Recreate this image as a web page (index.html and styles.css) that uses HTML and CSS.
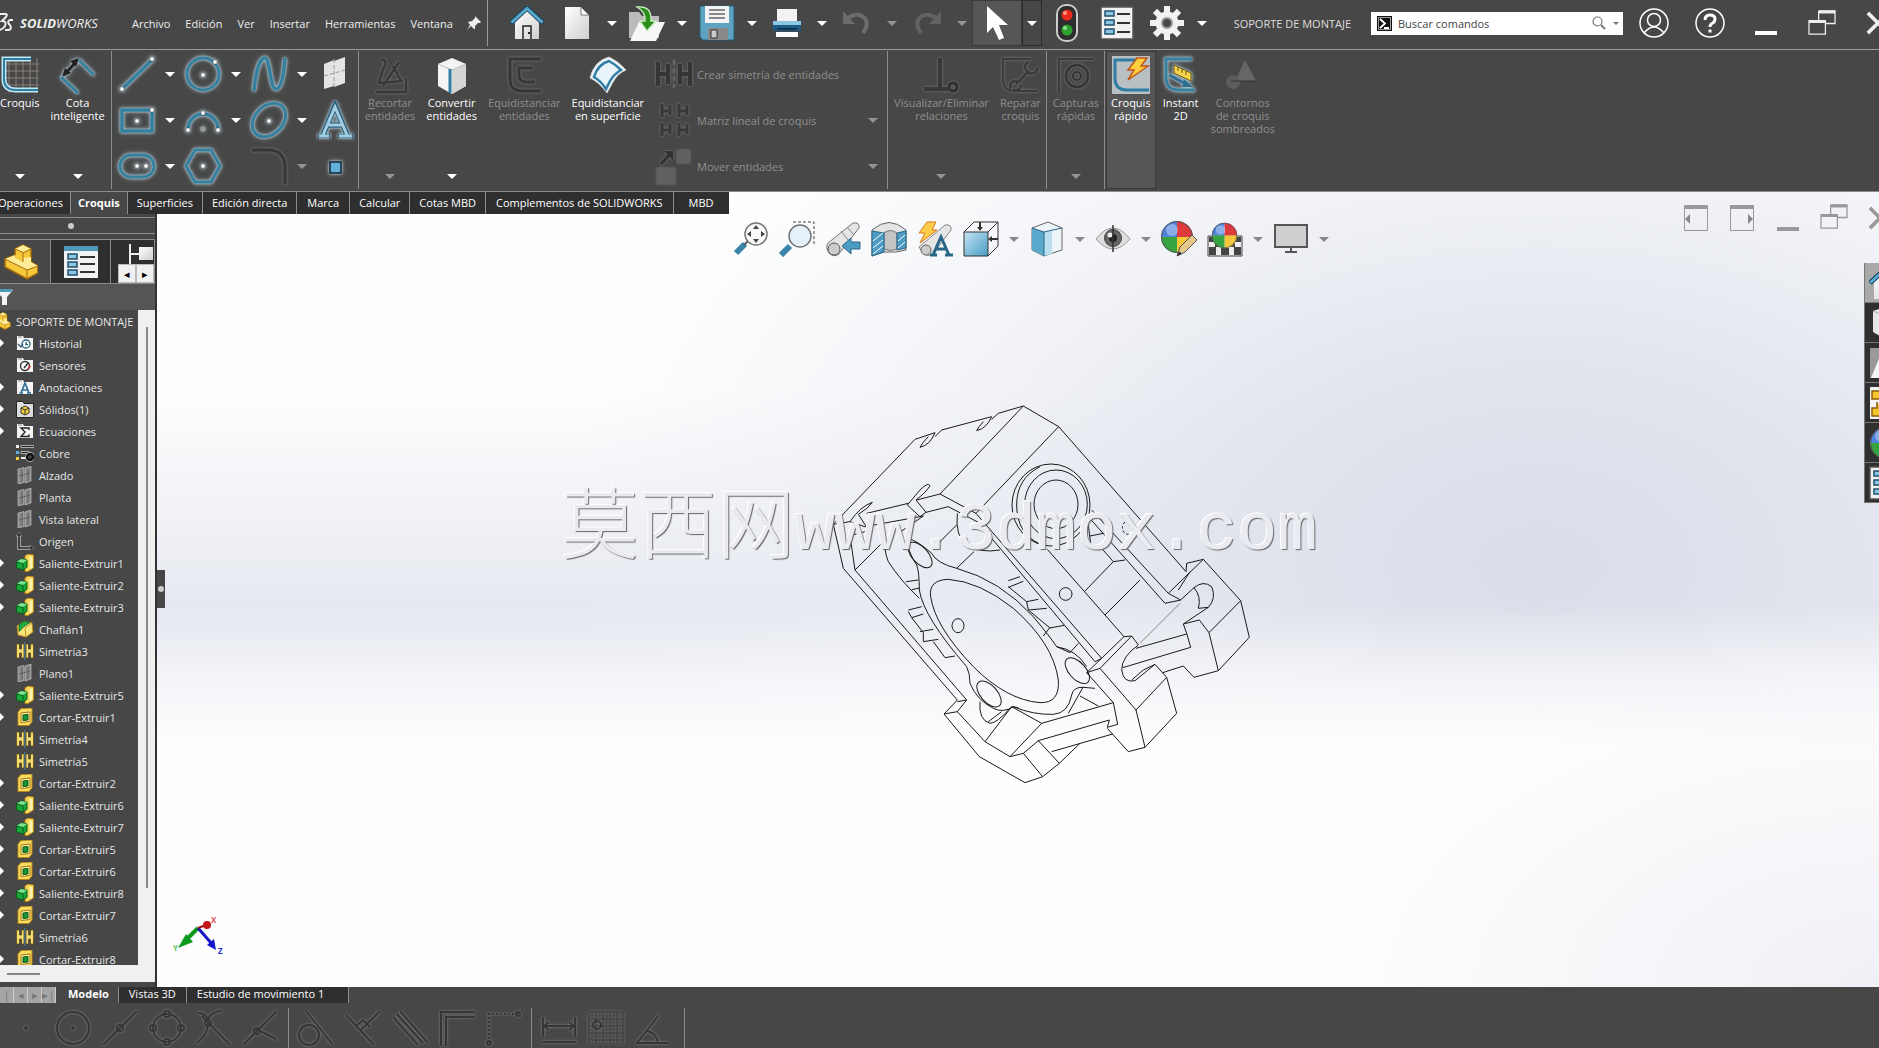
FILE: index.html
```html
<!DOCTYPE html>
<html lang="es">
<head>
    <meta charset="UTF-8">
    <meta name="viewport" content="width=device-width, initial-scale=1.0">
    <title>SOLIDWORKS - SOPORTE DE MONTAJE</title>
    <link rel="stylesheet" href="styles.css">
</head>
<body>
    <!-- shared icons -->
    <svg class="defs" width="0" height="0">
        <defs>
            <linearGradient id="g-white" x1="0" y1="0" x2="1" y2="1"><stop offset="0" stop-color="#fff"/><stop offset="1" stop-color="#cfcfcf"/></linearGradient>
            <linearGradient id="g-blue" x1="0" y1="0" x2="1" y2="1"><stop offset="0" stop-color="#c5e4f3"/><stop offset="1" stop-color="#4a9cc4"/></linearGradient>
        </defs>
        <symbol id="i-folder" viewBox="0 0 18 18"><path d="M1 2h6l1 2h9v12H1z" fill="#f4f4f4"/><path d="M2 3h4" stroke="#888"/></symbol>
        <symbol id="i-history" viewBox="0 0 18 18"><use href="#i-folder"/><circle cx="10" cy="10" r="4" fill="#fff" stroke="#2c5f7a" stroke-width="1.3"/><path d="M10 8v2.500h2M2 10l3 3 2-3" fill="none" stroke="#2c5f7a" stroke-width="1.300"/></symbol>
        <symbol id="i-sensor" viewBox="0 0 18 18"><use href="#i-folder"/><circle cx="9" cy="10" r="4.500" fill="#fff" stroke="#333" stroke-width="1.400"/><path d="M8 12l4-5" stroke="#333" stroke-width="1.500"/><path d="M12 13l2-3" stroke="#c33" stroke-width="2"/></symbol>
        <symbol id="i-note" viewBox="0 0 18 18"><use href="#i-folder"/><path d="M5 15L9 5l4 10M6.500 12h5M3.500 15h3.500M11 15h4" fill="none" stroke="#2f6f98" stroke-width="1.700"/></symbol>
        <symbol id="i-solid" viewBox="0 0 18 18"><path d="M.5 1.500h6.500l1 2h9.500v14H.5z" fill="#ddd" stroke="#222"/><path d="M5 8l4-2 4 2v5l-4 2-4-2z" fill="#f2cf3a" stroke="#333"/><path d="M5 8l4 2 4-2M9 10v5" fill="none" stroke="#333"/></symbol>
        <symbol id="i-sigma" viewBox="0 0 18 18"><use href="#i-folder"/><path d="M13 8V6H5l4 4-4 4.500h8v-2" fill="none" stroke="#222" stroke-width="1.400"/></symbol>
        <symbol id="i-material" viewBox="0 0 18 18"><path d="M0 1h3v3H0z" fill="#eee"/><path d="M0 7h3v3H0z" fill="#62a9dd"/><path d="M0 13h3v3H0z" fill="#f2cf3a"/><path d="M5 1.500h13v2H5zM5 7.500h8v2H5z" fill="#222" stroke="#bbb" stroke-width=".9"/><path d="M5 14h5" stroke="#eee" stroke-width="2"/><circle cx="14" cy="13" r="3" fill="none" stroke="#111" stroke-width="2.500"/><circle cx="14" cy="13" r="4.600" fill="none" stroke="#bbb" stroke-width=".8"/></symbol>
        <symbol id="i-plane" viewBox="0 0 18 18"><path d="M2 3l6-1.500v15L2 18zM9 2l6-2v15l-6 2z" fill="#8a8a8a" stroke="#bbb" stroke-width=".7"/><path d="M6 3v13M12 3v12M3 10l11-3" stroke="#555" stroke-width=".8"/></symbol>
        <symbol id="i-origin" viewBox="0 0 18 18"><path d="M3 2v14h13" fill="none" stroke="#bbb" stroke-width="3.500"/><path d="M3 1v15h14" fill="none" stroke="#222" stroke-width="1.600"/><path d="M0 4l3-4 3 4zM14 13l4 3-4 3z" fill="#222" stroke="#aaa" stroke-width=".6"/></symbol>
        <symbol id="i-boss" viewBox="0 0 18 18"><path d="M9 2l3-2 5.500 1v13L12 17.500H9z" fill="#f4d95c" stroke="#b98314"/><path d="M13.500 3.500v12l3-2V2z" fill="#fff3b0"/><path d="M.5 8L5 5l6 1v7l-4 3-6.500-2z" fill="#19a73a" stroke="#0b5a1c"/><path d="M1 8l6 1.500V15" fill="none" stroke="#0b5a1c"/><path d="M7 9l4-3-6-1-4 2.500z" fill="#7be48c"/></symbol>
        <symbol id="i-cut" viewBox="0 0 18 18"><path d="M2 4l3-3.500L16 0v14l-3 3.500H2z" fill="#f7dc62" stroke="#b98314"/><path d="M5 5l9-1v9.500l-9 1z" fill="#fff0a0" stroke="#a87412"/><path d="M7 7l5-.6v5.600l-5 .6z" fill="#17953a" stroke="#0b5a1c"/></symbol>
        <symbol id="i-mirror" viewBox="0 0 18 18"><path d="M.5 2h3v5h2V2H8v14H5.500v-5h-2v5h-3zM17.500 2h-3v5h-2V2H10v14h2.500v-5h2v5h3z" fill="#f5dc70" stroke="#5d4a1a" stroke-width=".8"/><path d="M9 0v18" stroke="#4a86ab"/></symbol>
        <symbol id="i-chamfer" viewBox="0 0 18 18"><path d="M1 6l7-5 8 2 1 9-7 5-8-2z" fill="#f8e27a" stroke="#b98314"/><path d="M3 5l5-4 6 1.500-6 4-5 5z" fill="#20ad42" stroke="#0b5a1c" stroke-width=".8"/><path d="M9 8l1 9M9 8l7-5" stroke="#c99a2b"/></symbol>
        <symbol id="i-part" viewBox="0 0 34 36"><path d="M1 15l10-4V5l8-4 8 4v13l7 4v7l-11 6-22-12z" fill="#f6c93c" stroke="#a06a0a" stroke-width="1.500"/><path d="M11 5l8 3 8-3-8-4zM1 15l10-4v3l8 4v-4l8-1v5l7 4-11 4z" fill="#ffec96"/><path d="M11 5l8 3.500V18M1 15l22 11v9M23 26l11-4M19 9l8-4" fill="none" stroke="#a06a0a"/></symbol>
        <symbol id="i-props" viewBox="0 0 34 34"><path d="M1 1h32v32H1z" fill="#f2f2f2" stroke="#555" stroke-width="1.500"/><path d="M5 5h9v5H5zM5 14h9v5H5zM5 23h9v5H5z" fill="#8cc7e6" stroke="#1f4f6b" stroke-width="1.500"/><path d="M17 8h13M17 17h13M17 26h13" stroke="#333" stroke-width="2"/></symbol>
        <symbol id="i-home" viewBox="0 0 34 34"><path d="M5 16L17 5l12 11v17H5z" fill="url(#g-white)"/><path d="M1 17L17 2l16 15" fill="none" stroke="#17465f" stroke-width="5"/><path d="M1.500 16.500L17 2.500l15.500 14" fill="none" stroke="#5aa9ce" stroke-width="3"/><path d="M13 33V20h8v13" fill="none" stroke="#222" stroke-width="1.500"/><path d="M18 27h2" stroke="#222" stroke-width="2"/></symbol>
        <symbol id="i-restore" viewBox="0 0 30 28"><path d="M11 1h17v13H18M11 11V1M1 11h17v14H1z" fill="none" stroke="currentColor" stroke-width="1.300"/><path d="M11 2h17M1 12h17" stroke="currentColor" stroke-width="3"/></symbol>
        <symbol id="i-cross" viewBox="0 0 26 26"><path d="M2 2l22 22M24 2L2 24" stroke="currentColor" stroke-width="4"/></symbol>
        <symbol id="i-ball" viewBox="0 0 34 34"><path d="M17 17V1A16 16 0 0 0 1 17z" fill="#4f83dc"/><path d="M17 17h16A16 16 0 0 0 17 1z" fill="#dd3a3e"/><path d="M17 17v16a16 16 0 0 0 16-16z" fill="#f5c73a"/><path d="M17 17H1a16 16 0 0 0 16 16z" fill="#36a53f"/><circle cx="12" cy="10" r="6" fill="#fff" opacity=".35"/><circle cx="17" cy="17" r="15.500" fill="none" stroke="#555"/></symbol>
    </svg>

    <header class="titlebar">
        <div class="brand">
            <svg class="brand-mark" viewBox="0 0 18 22"><path d="M2 2h8q2 1-1 4L6 9q5 0 3 5-3 5-9 4M17 8h-3q-3 1-1 4 4 4 0 6h-4" fill="none" stroke="#eee" stroke-width="2"/></svg>
            <span><b>SOLID</b>WORKS</span>
        </div>
        <nav class="menu">
            <a href="#">Archivo</a>
            <a href="#">Edición</a>
            <a href="#">Ver</a>
            <a href="#">Insertar</a>
            <a href="#">Herramientas</a>
            <a href="#">Ventana</a>
            <button class="pin" aria-label="Anclar"><svg width="14" height="14" viewBox="0 0 14 14"><path d="M8 0l6 6-1 1-2 0-3 3 0 3-1 0-3-3-4 4 3-5-2-3 4-1 3-3z" fill="#eee"/></svg></button>
        </nav>
        <div class="quick">
            <button aria-label="Inicio"><svg width="34" height="34"><use href="#i-home"/></svg></button>
            <button aria-label="Nuevo"><svg width="26" height="34" viewBox="0 0 26 34"><path d="M1 1h16l8 8v24H1z" fill="url(#g-white)"/><path d="M17 1v8h8z" fill="#fff" stroke="#777"/></svg></button>
            <button class="drop" aria-label="Más"><i class="caret"></i></button>
            <button aria-label="Abrir"><svg width="38" height="38" viewBox="0 0 38 38"><path d="M1 8h10l3 4h17v22H1z" fill="#bbb"/><path d="M11 18h26l-9 19H2z" fill="#f7f7f7"/><path d="M9 3q15-2 14 14h5l-9 10-7-10h5Q18 8 9 3z" fill="#2d8f1b" stroke="#cdeec4" stroke-width="1.300"/></svg></button>
            <button class="drop" aria-label="Más"><i class="caret"></i></button>
            <button aria-label="Guardar"><svg width="36" height="36" viewBox="0 0 36 36"><path d="M1 1h34v34H4l-3-3z" fill="#5ea2c2" stroke="#2a5d77"/><path d="M6 1h24v17H6z" fill="#f4f4f4"/><path d="M10 5h16M10 9h16M10 13h16" stroke="#666" stroke-width="1.500"/><path d="M9 23h20v12H9z" fill="#888"/><path d="M12 25h6v8h-6z" fill="#ccc" stroke="#333"/></svg></button>
            <button class="drop" aria-label="Más"><i class="caret"></i></button>
            <button aria-label="Imprimir"><svg width="30" height="30" viewBox="0 0 30 30"><path d="M5 1h20v14H5z" fill="#f2f2f2"/><path d="M1 13h28v10H1z" fill="#8cc7e6"/><path d="M1 17h28v6H1z" fill="#1d5b82"/><path d="M5 20h20v2H5z" fill="#0d3854"/><path d="M4 24h22v5H4z" fill="#fff"/></svg></button>
            <button class="drop" aria-label="Más"><i class="caret"></i></button>
            <button aria-label="Deshacer" disabled><svg width="30" height="28" viewBox="0 0 30 28"><path d="M3 12q8-9 17-5 9 6 1 17" fill="none" stroke="#6c6c6c" stroke-width="4"/><path d="M1 2v13h12z" fill="#6c6c6c"/></svg></button>
            <button class="drop" aria-label="Más" disabled><i class="caret"></i></button>
            <button aria-label="Rehacer" disabled><svg width="30" height="28" viewBox="0 0 30 28"><path d="M27 12q-8-9-17-5-9 6-1 17" fill="none" stroke="#626262" stroke-width="4"/><path d="M29 2v13H17z" fill="#626262"/></svg></button>
            <button class="drop" aria-label="Más" disabled><i class="caret"></i></button>
            <button class="picked" aria-label="Seleccionar"><svg width="24" height="36" viewBox="0 0 24 36"><path d="M2 1v27l6-6 6 13 5-2-5-13h9z" fill="#fff"/></svg></button>
            <button class="drop picked-drop" aria-label="Más"><i class="caret"></i></button>
            <button aria-label="Reconstruir"><svg width="22" height="38" viewBox="0 0 22 38"><rect x="1" y="1" width="20" height="36" rx="9" fill="#2d2d2d" stroke="#ccc" stroke-width="2"/><circle cx="11" cy="11" r="5.500" fill="#e8291b"/><circle cx="11" cy="26" r="5.500" fill="#2fa032"/><circle cx="9" cy="9" r="2" fill="#ff9a80"/><circle cx="9" cy="24" r="2" fill="#8ddc8a"/></svg></button>
            <button aria-label="Propiedades"><svg width="34" height="34"><use href="#i-props"/></svg></button>
            <button aria-label="Opciones"><svg width="34" height="34" viewBox="0 0 34 34"><g fill="#f2f2f2"><path d="M14 0h6v34h-6z"/><path d="M14 0h6v34h-6z" transform="rotate(45 17 17)"/><path d="M14 0h6v34h-6z" transform="rotate(90 17 17)"/><path d="M14 0h6v34h-6z" transform="rotate(135 17 17)"/><circle cx="17" cy="17" r="11.500"/></g><circle cx="17" cy="17" r="5" fill="#474747" stroke="#999" stroke-width="2"/></svg></button>
            <button class="drop" aria-label="Más"><i class="caret"></i></button>
        </div>
        <div class="doc-title">SOPORTE DE MONTAJE</div>
        <div class="search">
            <svg width="15" height="15" viewBox="0 0 15 15"><path d="M0 0h15v15H0z" fill="#111"/><path d="M1.500 1.500h12v12h-12z" fill="none" stroke="#fff" stroke-width=".6"/><path d="M3 3l5 4.500L3 12M7 12h5" fill="none" stroke="#fff" stroke-width="1.800"/></svg>
            <input type="text" aria-label="Buscar comandos" placeholder="Buscar comandos">
            <button aria-label="Buscar"><svg width="14" height="14" viewBox="0 0 14 14"><circle cx="5.500" cy="5.500" r="4.500" fill="none" stroke="#777" stroke-width="1.200"/><path d="M9 9l4 4" stroke="#777" stroke-width="2"/></svg></button>
            <button aria-label="Más"><i class="caret small"></i></button>
        </div>
        <div class="window-controls">
            <button aria-label="Usuario"><svg width="30" height="30" viewBox="0 0 30 30" fill="none" stroke="#fff" stroke-width="1.500"><circle cx="15" cy="15" r="14"/><circle cx="15" cy="12" r="6.500"/><path d="M5 25q10-12 20 0"/></svg></button>
            <button aria-label="Ayuda"><svg width="30" height="30" viewBox="0 0 30 30" fill="none" stroke="#fff"><circle cx="15" cy="15" r="14" stroke-width="1.500"/><path d="M10 12q0-5 5-5t5 4q0 3-3 4.500-2 1-2 3.500" stroke-width="3"/><path d="M15 21.500v3" stroke-width="3"/></svg></button>
            <button aria-label="Minimizar"><svg width="22" height="26" viewBox="0 0 22 26"><path d="M0 21h22v4H0z" fill="#fff"/></svg></button>
            <button aria-label="Restaurar"><svg width="29" height="27"><use href="#i-restore"/></svg></button>
            <button aria-label="Cerrar"><svg width="24" height="24"><use href="#i-cross"/></svg></button>
        </div>
    </header>

    <section class="ribbon">
        <div class="group first">
            <button class="tool"><svg width="38" height="38" viewBox="0 0 38 38"><path d="M8 2v35M15 2v35M22 2v35M29 2v35M36 2v35M4 8h34M4 15h34M4 22h34M4 29h34" stroke="#8a8178"/><path d="M30 3H3v20q0 11 12 11h22" fill="none" stroke="#bfe6f5" stroke-width="5"/><path d="M30 3H3v20q0 11 12 11h22" fill="none" stroke="#2f7d9f" stroke-width="2"/></svg><span>Croquis</span><i class="caret"></i></button>
            <button class="tool"><svg class="glow" width="38" height="38" viewBox="0 0 38 38"><path d="M20 4l15 15M2 21l17 16" stroke="#36809f" stroke-width="3"/><path d="M2 21L20 3" stroke="#bfe6f5"/><path d="M7 17L17 6" stroke="#222" stroke-width="3"/><path d="M3 21l3-9 6 5zM20 2l-9 3 6 6z" fill="#222"/></svg><span>Cota<br>inteligente</span><i class="caret"></i></button>
        </div>

        <div class="group sketch-grid">
            <div class="cell"><button aria-label="Línea"><svg class="glow" viewBox="0 0 38 38"><path d="M4 34L34 5" stroke="#36809f" stroke-width="3.500"/><path d="M2 32h4v4H2zM32 2h4v4h-4z" class="pt"/></svg></button><i class="caret"></i></div>
            <div class="cell"><button aria-label="Círculo"><svg class="glow" viewBox="0 0 38 38"><circle cx="19" cy="19" r="16" fill="none" stroke="#36809f" stroke-width="3"/><path d="M17 18h4v4h-4zM29 5h4v4h-4z" class="pt"/></svg></button><i class="caret"></i></div>
            <div class="cell"><button aria-label="Spline"><svg class="glow" viewBox="0 0 38 38"><path d="M4 36C6 14 10 3 15 3s5 31 11 31S34 16 35 3" fill="none" stroke="#36809f" stroke-width="3.500"/></svg></button><i class="caret"></i></div>
            <div class="cell"><button aria-label="Plano"><svg viewBox="0 0 38 38"><path d="M8 9l10-4v26L8 34zM18 6l11-4v26l-11 4z" fill="#e4e4e4"/><path d="M18 4v28M8 21l21-6" stroke="#999" stroke-dasharray="4 2"/></svg></button></div>
            <div class="cell"><button aria-label="Rectángulo"><svg class="glow" viewBox="0 0 38 38"><path d="M4 9h30v21H4z" fill="none" stroke="#36809f" stroke-width="3.500"/><path d="M17 18h4v4h-4zM32 7h4v4h-4z" class="pt"/></svg></button><i class="caret"></i></div>
            <div class="cell"><button aria-label="Arco"><svg class="glow" viewBox="0 0 38 38"><path d="M4 28a15 15 0 0 1 30 0" fill="none" stroke="#36809f" stroke-width="3.500"/><path d="M2 27h4v4H2zM32 27h4v4h-4zM17 10h4v4h-4z" class="pt"/><path d="M17 26h4v4h-4z" fill="#999"/></svg></button><i class="caret"></i></div>
            <div class="cell"><button aria-label="Elipse"><svg class="glow" viewBox="0 0 38 38"><ellipse cx="19" cy="19" rx="19" ry="14" transform="rotate(-45 19 19)" fill="none" stroke="#36809f" stroke-width="3"/><path d="M17 18h4v4h-4z" class="pt"/></svg></button><i class="caret"></i></div>
            <div class="cell"><button aria-label="Texto"><svg class="glow" viewBox="0 0 38 38"><path d="M7 34L19 5l12 29M12 24h14" fill="none" stroke="#276080" stroke-width="5.500"/><path d="M2 35h12M22 35h15" stroke="#276080" stroke-width="4"/><path d="M7 34L19 6l12 28M12 24h14M3 35h10M23 35h13" fill="none" stroke="#a5cde0" stroke-width="3"/></svg></button></div>
            <div class="cell"><button aria-label="Ranura"><svg class="glow" viewBox="0 0 38 38"><rect x="2" y="8" width="34" height="22" rx="11" fill="none" stroke="#36809f" stroke-width="3"/><path d="M17 17h4v4h-4zM26 17h4v4h-4z" class="pt"/></svg></button><i class="caret"></i></div>
            <div class="cell"><button aria-label="Polígono"><svg class="glow" viewBox="0 0 38 38"><path d="M11 3h16l9 16-9 16H11L2 19z" fill="none" stroke="#36809f" stroke-width="3"/><path d="M17 17h4v4h-4z" class="pt"/></svg></button></div>
            <div class="cell off"><button aria-label="Redondeo" disabled><svg class="dim" viewBox="0 0 38 38"><path d="M2 3h16q17 0 17 18v16" fill="none" stroke="#353535" stroke-width="3"/></svg></button><i class="caret"></i></div>
            <div class="cell"><button aria-label="Punto"><svg class="glow" viewBox="0 0 38 38"><path d="M14 15h11v11H14z" fill="#62b1dc" stroke="#123" stroke-width="1.500"/></svg></button></div>
        </div>

        <div class="group">
            <button class="tool" disabled><svg class="dim" width="38" height="38" viewBox="0 0 38 38"><path d="M5 36h30V22M7 27l25-2M10 3q8 2 2 10L8 26M28 6L12 30M22 10l8 15" fill="none" stroke="#383838" stroke-width="2.500"/></svg><span><u>R</u>ecortar<br>entidades</span><i class="caret"></i></button>
            <button class="tool"><svg width="38" height="38" viewBox="0 0 38 38"><path d="M5 8l14-6 14 6v22l-14 8-14-8z" fill="#f4f4f4"/><path d="M19 14l14-6v22l-14 8z" fill="#d5d5d5"/><path d="M5 8l14 6 14-6" fill="none" stroke="#bbb"/><path d="M17 13v24" stroke="#2f7da3" stroke-width="3"/></svg><span>Convertir<br>entidades</span><i class="caret"></i></button>
            <button class="tool" disabled><svg class="dim" width="38" height="38" viewBox="0 0 38 38"><path d="M36 3H5v20q0 12 12 12h19M28 12H14v7q0 7 8 7h8" fill="none" stroke="#363636" stroke-width="3"/></svg><span>Equidistanciar<br>entidades</span></button>
            <button class="tool"><svg width="38" height="38" viewBox="0 0 38 38"><path d="M1 22Q5 5 20 1q9 4 17 13-8 3-13 12l-6 11Q10 26 1 22z" fill="#eef7fb" stroke="#ccc"/><path d="M5 21Q9 8 20 5q6 3 12 9-7 4-11 11l-4 8Q12 25 5 21z" fill="#e8f4fa" stroke="#2f7da3" stroke-width="2.500"/></svg><span>Equidistanciar<br>en superficie</span></button>
            <div class="tool-list">
                <button disabled><svg class="dim" width="38" height="30" viewBox="0 0 38 30"><path d="M3 3v24M3 15h10M13 5v20M25 5v20M25 15h10M35 3v24" stroke="#353535" stroke-width="4"/><path d="M19 1v28" stroke="#777" stroke-dasharray="5 3"/></svg><span>Crear simetría de entidades</span></button>
                <button disabled><svg class="dim" width="38" height="38" viewBox="0 0 38 38"><path d="M7 3v13M7 10h9M15 4v10M24 3v13M24 10h9M32 4v10M7 22v13M7 29h9M15 23v10M24 22v13M24 29h9M32 23v10" stroke="#383838" stroke-width="3"/></svg><span>Matriz lineal de croquis</span><i class="caret"></i></button>
                <button disabled><svg class="dim" width="38" height="38" viewBox="0 0 38 38"><path d="M22 3h13v13H22z" fill="#606060"/><path d="M2 21h18v16H2z" fill="#606060"/><path d="M6 17L15 7" stroke="#303030" stroke-width="3"/><path d="M9 4h9v9z" fill="#303030"/></svg><span>Mover entidades</span><i class="caret"></i></button>
            </div>
        </div>

        <div class="group">
            <button class="tool" disabled><svg class="dim" width="38" height="38" viewBox="0 0 38 38"><path d="M18 2v30M2 33h24" stroke="#383838" stroke-width="4"/><circle cx="31" cy="31" r="4" fill="none" stroke="#303030" stroke-width="3"/></svg><span>Visualizar/Eliminar<br>relaciones</span><i class="caret"></i></button>
            <button class="tool" disabled><svg class="dim" width="38" height="38" viewBox="0 0 38 38"><path d="M30 3H2v20q0 12 12 12h23" fill="none" stroke="#3a3a3a" stroke-width="2"/><path d="M15 28l13-13M28 6q-6 2-3 8t10 2l2-5M16 25q-7-1-7 8M20 29q0 6-8 5" fill="none" stroke="#3a3a3a" stroke-width="2.500"/></svg><span>Reparar<br>croquis</span></button>
        </div>

        <div class="group">
            <button class="tool" disabled><svg class="dim" width="38" height="38" viewBox="0 0 38 38"><path d="M37 3H2v34" fill="none" stroke="#3a3a3a" stroke-width="2"/><circle cx="20" cy="20" r="11" fill="none" stroke="#353535" stroke-width="2.500"/><circle cx="20" cy="20" r="4" fill="none" stroke="#353535" stroke-width="2"/></svg><span>Capturas<br>rápidas</span><i class="caret"></i></button>
        </div>

        <div class="group last">
            <button class="tool active"><svg width="38" height="38" viewBox="0 0 38 38"><path d="M0 0h38v38H0z" fill="#b9c0c4"/><path d="M34 4H3v18q0 12 12 12h22" fill="none" stroke="#2f7da3" stroke-width="3"/><path d="M25 2h10l-6 8h7L16 24l6-10h-6z" fill="#ffcf3f" stroke="#c0561a" stroke-width="1.500"/></svg><span>Croquis<br>rápido</span></button>
            <button class="tool"><svg class="glow" width="38" height="38" viewBox="0 0 38 38"><path d="M30 3H4v18q0 13 13 13h16" fill="none" stroke="#36809f" stroke-width="3"/><path d="M12 9l17 8v8l-17-8z" fill="#f7d64a" stroke="#6b5410"/><path d="M16 11v4M20 13v4M24 15v4" stroke="#6b5410"/><path d="M7 19l17 9" stroke="#2d6f92" stroke-width="3"/><path d="M22 23l9 8-11 0z" fill="#2d6f92"/></svg><span>Instant<br>2D</span></button>
            <button class="tool" disabled><svg width="38" height="38" viewBox="0 0 38 38"><path d="M21 4l11 21H11z" fill="#666"/><circle cx="9" cy="26" r="7" fill="#5c5c5c"/><path d="M7 25h25" stroke="#333"/></svg><span>Contornos<br>de croquis<br>sombreados</span></button>
        </div>
    </section>

    <main class="workspace">
        <nav class="command-tabs">
            <a href="#" class="tight">Operaciones</a>
            <a href="#" class="tight current">Croquis</a>
            <a href="#">Superficies</a>
            <a href="#">Edición directa</a>
            <a href="#" class="wide">Marca</a>
            <a href="#">Calcular</a>
            <a href="#">Cotas MBD</a>
            <a href="#" class="wide">Complementos de SOLIDWORKS</a>
            <a href="#" class="mbd">MBD</a>
        </nav>

        <div class="workspace-body">
            <aside class="sidebar">
                <div class="splitter"><i></i></div>
                <div class="panel-tabs">
                    <button class="on" aria-label="Gestor de diseño"><svg width="34" height="36"><use href="#i-part"/></svg></button>
                    <button aria-label="Propiedades"><svg width="34" height="32" viewBox="0 0 34 32"><path d="M0 0h34v32H0z" fill="#f2f2f2"/><path d="M0 0h34v5H0z" fill="#4f98ba"/><path d="M4 8h9v5H4zM4 16h9v5H4zM4 24h9v5H4z" fill="#8cc7e6" stroke="#1f4f6b" stroke-width="1.500"/><path d="M16 11h15M16 18h15M16 26h15" stroke="#333" stroke-width="1.800"/></svg></button>
                    <button aria-label="Configuraciones"><svg width="26" height="36" viewBox="0 0 26 36"><path d="M2 0v36M2 10h10" fill="none" stroke="#eee" stroke-width="2"/><path d="M11 3h14v13H11z" fill="url(#g-white)"/></svg></button>
                    <div class="tab-scroll"><button aria-label="Anterior">◂</button><button aria-label="Siguiente">▸</button></div>
                </div>
                <div class="filter"><svg width="14" height="18" viewBox="0 0 14 18"><path d="M-6 2h19L7 9v8H2V9z" fill="#f4f4f4"/><path d="M-6 1h19l-2 3h-17z" fill="#4f98ba"/></svg></div>
                <div class="tree-wrap">
                    <ul class="tree">
                        <li class="root"><svg><use href="#i-part"/></svg>SOPORTE DE MONTAJE</li>
                        <li class="open"><svg><use href="#i-history"/></svg>Historial</li>
                        <li><svg><use href="#i-sensor"/></svg>Sensores</li>
                        <li class="open"><svg><use href="#i-note"/></svg>Anotaciones</li>
                        <li class="open"><svg><use href="#i-solid"/></svg>Sólidos(1)</li>
                        <li class="open"><svg><use href="#i-sigma"/></svg>Ecuaciones</li>
                        <li><svg><use href="#i-material"/></svg>Cobre</li>
                        <li><svg><use href="#i-plane"/></svg>Alzado</li>
                        <li><svg><use href="#i-plane"/></svg>Planta</li>
                        <li><svg><use href="#i-plane"/></svg>Vista lateral</li>
                        <li><svg><use href="#i-origin"/></svg>Origen</li>
                        <li class="open"><svg><use href="#i-boss"/></svg>Saliente-Extruir1</li>
                        <li class="open"><svg><use href="#i-boss"/></svg>Saliente-Extruir2</li>
                        <li class="open"><svg><use href="#i-boss"/></svg>Saliente-Extruir3</li>
                        <li><svg><use href="#i-chamfer"/></svg>Chaflán1</li>
                        <li><svg><use href="#i-mirror"/></svg>Simetría3</li>
                        <li><svg><use href="#i-plane"/></svg>Plano1</li>
                        <li class="open"><svg><use href="#i-boss"/></svg>Saliente-Extruir5</li>
                        <li class="open"><svg><use href="#i-cut"/></svg>Cortar-Extruir1</li>
                        <li><svg><use href="#i-mirror"/></svg>Simetría4</li>
                        <li><svg><use href="#i-mirror"/></svg>Simetría5</li>
                        <li class="open"><svg><use href="#i-cut"/></svg>Cortar-Extruir2</li>
                        <li class="open"><svg><use href="#i-boss"/></svg>Saliente-Extruir6</li>
                        <li class="open"><svg><use href="#i-boss"/></svg>Saliente-Extruir7</li>
                        <li class="open"><svg><use href="#i-cut"/></svg>Cortar-Extruir5</li>
                        <li class="open"><svg><use href="#i-cut"/></svg>Cortar-Extruir6</li>
                        <li class="open"><svg><use href="#i-boss"/></svg>Saliente-Extruir8</li>
                        <li class="open"><svg><use href="#i-cut"/></svg>Cortar-Extruir7</li>
                        <li><svg><use href="#i-mirror"/></svg>Simetría6</li>
                        <li class="open"><svg><use href="#i-cut"/></svg>Cortar-Extruir8</li>
                    </ul>
                    <div class="vbar"><i></i></div>
                </div>
                <div class="hbar"><i></i></div>
            </aside>

            <section class="viewport">
                <button class="collapse" aria-label="Contraer panel"><i></i></button>
                <div class="view-tools">
                    <button aria-label="Zoom para ajustar"><svg width="36" height="36" viewBox="0 0 36 36"><path d="M3 32l9-9" stroke="#3b84a8" stroke-width="6"/><path d="M11 24l5-5" stroke="#555" stroke-width="2"/><circle cx="23" cy="13" r="11" fill="#fafafa" stroke="#777" stroke-width="1.500"/><path d="M20 8l3-4 3 4zM20 18l3 4 3-4zM18 10l-4 3 4 3zM28 10l4 3-4 3z" fill="#444"/></svg></button>
                    <button aria-label="Zoom encuadre"><svg width="36" height="36" viewBox="0 0 36 36"><path d="M14 1h21v22" fill="none" stroke="#444" stroke-dasharray="3 2"/><path d="M2 34l9-9" stroke="#3b84a8" stroke-width="6"/><circle cx="21" cy="15" r="11" fill="#e6f0fa" stroke="#777" stroke-width="1.500"/></svg></button>
                    <button aria-label="Vista previa"><svg width="36" height="36" viewBox="0 0 36 36"><path d="M3 22L28 2q7-1 6 5L14 33q-5 4-10-1-4-6-1-10z" fill="#e5e5e5" stroke="#777"/><circle cx="9" cy="28" r="6" fill="#ccc" stroke="#555"/><path d="M16 10l8 10M22 6l7 8" stroke="#888"/><path d="M35 21v7h-9v5l-9-8 9-8v4z" fill="#4c9cc4" stroke="#2a6685"/></svg></button>
                    <button aria-label="Vista de sección"><svg width="36" height="36" viewBox="0 0 36 36"><path d="M1 9q17-15 34 0v20l-10 2H13L1 35z" fill="#e4e4e4" stroke="#666"/><path d="M13 12q6-5 13 0v16q-6 3-13 0z" fill="#c4c4c4" stroke="#777"/><path d="M1 10l12 2v19L1 35zM35 10l-9 2v17l9-2z" fill="#4c9cc4" stroke="#2a6685"/><path d="M2 20l10-8M2 27l10-8M2 33l10-8M27 20l7-6M27 27l7-6" stroke="#fff"/></svg></button>
                    <button aria-label="Vistas de anotación"><svg width="36" height="36" viewBox="0 0 36 36"><path d="M2 26L28 4q7-1 6 5L16 33q-8 5-14-7z" fill="#e5e5e5" stroke="#888"/><circle cx="9" cy="29" r="5" fill="#ccc" stroke="#666"/><path d="M10 1h9l-4 8h5L3 22l5-10H2z" fill="#ffcf4a" stroke="#d9771c"/><path d="M16 34l8-18 8 18M19 28h10M13 34h7M28 34h8" fill="none" stroke="#2a6685" stroke-width="3"/></svg></button>
                    <button aria-label="Orientación"><svg width="36" height="36" viewBox="0 0 36 36"><path d="M1 11h24v24H1z" fill="url(#g-blue)" stroke="#333"/><path d="M1 11L11 1h24L25 11M35 1v24L25 35" fill="none" stroke="#333"/><path d="M17 1v8M35 18h-8" stroke="#333" stroke-width="2"/><path d="M14 6h6l-3 4zM29 15v6l-4-3z" fill="#333"/></svg></button>
                    <button class="drop" aria-label="Más"><i class="caret"></i></button>
                    <button aria-label="Estilo de visualización"><svg width="32" height="36" viewBox="0 0 32 36"><path d="M1 7l16-6 14 6v22l-18 6L1 29z" fill="#eef5f8" stroke="#666"/><path d="M1 7l12 4v24L1 29z" fill="#5ba8cd"/><path d="M13 11l8-2v24l-8 2z" fill="#b9dff0"/><path d="M1 7l12 4 18-4M13 11v24" fill="none" stroke="#2a6685"/></svg></button>
                    <button class="drop" aria-label="Más"><i class="caret"></i></button>
                    <button aria-label="Ocultar/visualizar"><svg width="36" height="28" viewBox="0 0 36 28"><path d="M1 14Q18-8 35 14 18 34 1 14z" fill="#dedede" stroke="#999"/><circle cx="18" cy="13" r="8.500" fill="#666" stroke="#444"/><circle cx="18" cy="13" r="4" fill="#222"/><circle cx="15" cy="10" r="2.500" fill="#eee"/><path d="M18 0v27" stroke="#333" stroke-width="1.500"/></svg></button>
                    <button class="drop" aria-label="Más"><i class="caret"></i></button>
                    <button aria-label="Editar apariencia"><svg width="38" height="38" viewBox="0 0 38 38"><use href="#i-ball" width="34" height="34"/><path d="M17 36l3-9 12-12 5 5-12 12z" fill="#e6c98a" stroke="#555"/><path d="M17 36l2-5 3 3z" fill="#333"/></svg></button>
                    <button aria-label="Aplicar escena"><svg width="36" height="36" viewBox="0 0 36 36"><path d="M1 15h34v20H1z" fill="#eee" stroke="#444"/><path d="M2 16h6v5H2zM28 16h6v5h-6zM8 21h5v5H8zM23 21h5v5h-5zM2 26h7v8H2zM14 27h8v7h-8zM27 26h7v8h-7z" fill="#444"/><use href="#i-ball" x="4" y="1" width="27" height="27"/></svg></button>
                    <button class="drop" aria-label="Más"><i class="caret"></i></button>
                    <button aria-label="Configuración de vista"><svg width="34" height="30" viewBox="0 0 34 30"><path d="M1 1h32v22H1z" fill="#cfcfd2" stroke="#555" stroke-width="2"/><path d="M17 24v4M11 28h12" stroke="#555" stroke-width="2"/></svg></button>
                    <button class="drop" aria-label="Más"><i class="caret"></i></button>
                </div>

                <svg class="model" viewBox="0 0 1320 1230">
                    <!-- upper housing -->
                    <path d="M40 403L285 148 345 128Q330 165 300 172 306 160 325 140M345 140L365 120 515 80Q500 115 470 122 474 112 490 95M515 88L535 70 610 48 716 110 1098 545M610 48L360 312 468 370 716 110M360 312L290 330M468 370L845 805M318 367L385 350 475 397 825 815"/>
                    <path d="M40 403L70 535 412 930 372 972M40 403L90 395M90 437L105 540 440 930 412 965M105 540L200 445M90 437L135 425M135 410L310 378M140 370L265 340M90 395Q120 350 157 337 145 355 115 373L140 412 90 395M262 345L300 300Q325 275 330 287 320 305 288 330L318 367 300 380 262 345"/>
                    <path d="M310 378L235 430M195 430Q190 480 205 515 240 570 298 625M412 370Q405 440 440 465 480 490 540 480M340 475L410 405M462 485L410 535"/>
                    <!-- bearing seat -->
                    <ellipse cx="693" cy="345" rx="117" ry="123"/><path d="M660 230Q590 265 590 345 590 430 660 462"/><ellipse cx="708" cy="343" rx="94" ry="103"/><ellipse cx="708" cy="343" rx="66" ry="73"/>
                    <!-- flange -->
                    <path d="M262 445Q260 480 290 525 298 545 298 600 310 680 440 830 450 850 450 880 470 930 520 955 550 970 580 950 640 975 700 973 745 970 755 915 760 890 790 892L825 895M262 445Q290 450 335 490 350 520 410 535 540 570 640 680 690 740 710 770 770 780 800 830"/>
                    <path d="M332 620Q325 570 385 568 480 575 580 655 700 760 715 870 720 940 660 938 560 930 460 830 345 710 332 620"/>
                    <ellipse cx="300" cy="495" rx="24" ry="47" transform="rotate(-42 300 495)"/><ellipse cx="507" cy="912" rx="25" ry="47" transform="rotate(-42 507 912)"/><ellipse cx="772" cy="842" rx="25" ry="47" transform="rotate(-42 772 842)"/>
                    <circle cx="737" cy="612" r="19"/><ellipse cx="414" cy="707" rx="18" ry="21"/><ellipse cx="925" cy="413" rx="18" ry="20" stroke-dasharray="8 6"/>
                    <!-- ribs -->
                    <path d="M258 575L295 570M275 599L298 594M265 660L305 650M265 665L275 683 310 672M275 683L310 728 310 755 355 748M300 725L340 718M340 755L375 803 405 798M565 572L600 560M565 592L610 574M565 590L620 635 655 628M620 635L625 660 680 655M625 660L690 714 732 706M690 712L670 738M710 770L750 788L775 760"/>
                    <path d="M682 478L912 740M795 603L880 515M855 675L960 570M845 475L880 515 915 510M805 405L812 460M810 438L850 430M815 360L1045 610M812 388L1035 640"/>
                    <!-- right bracket -->
                    <path d="M1045 610L1150 508 1262 632 1288 742 1195 842 1122 862 1090 828 1028 848M1035 640L1082 630 1045 610M1075 600L1110 545M1098 545L1100 520 1150 508M1262 632L1167 728 1195 842M1167 728L1138 690 1090 702 1100 730 1112 772 908 833M948 775L1100 732M1082 630L1122 593Q1150 570 1175 590 1190 625 1165 652L1090 702M1122 593Q1145 620 1135 655L1165 652"/>
                    <path d="M960 760L1080 640" stroke="#888"/>
                    <!-- middle bracket -->
                    <path d="M912 740L935 738 955 765Q905 800 905 840 910 880 945 872L1005 823 1040 862 1070 970 975 1072 925 1085 862 1015M935 738L840 835 948 960 975 1072M948 960L1040 862M912 740L800 848 880 938 893 1003 862 1012 868 990M840 835L800 848M825 815L845 805M935 870L970 840 1005 823"/>
                    <!-- lower bracket -->
                    <path d="M880 938L665 1000 575 950 495 1055 570 1100 665 1000M575 950L595 953M372 972L478 1100 615 1178 668 1160 718 1120 780 1060M570 1100L610 1090 668 1160M610 1090L655 1052 868 990M655 1052L718 1120M695 1085L878 1032M412 965L495 1055M372 972L412 965M412 935L440 930M480 935Q475 990 510 1000 530 1000 570 955M505 995L545 965M745 970L790 890M780 918L835 948"/>
                </svg>

                <div class="watermark">莫西网<span>www.3dmox.com</span></div>

                <svg class="triad" width="52" height="42" viewBox="0 0 52 42">
                    <path d="M25 13L12 26" stroke="#0b9a1b" stroke-width="4"/><path d="M13 19l7 8-15 6z" fill="#0b9a1b"/>
                    <path d="M25 13l14 16" stroke="#1414c8" stroke-width="3"/><path d="M34 30l7-6 2 11z" fill="#1414c8"/>
                    <path d="M25 13l8-3" stroke="#a01010" stroke-width="2"/><circle cx="34" cy="10" r="4" fill="#c01818"/>
                    <text x="38" y="8" fill="#e05050">X</text><text x="0" y="36" fill="#60c060">Y</text><text x="45" y="39" fill="#2a2ad0">Z</text>
                </svg>

                <div class="task-pane">
                    <button class="on" aria-label="Recursos"><svg width="34" height="34"><use href="#i-home"/></svg></button>
                    <button aria-label="Biblioteca"><svg width="34" height="34" viewBox="0 0 34 34"><path d="M4 5l12-4 14 6v22l-14 4L4 26z" fill="#e6e6e6"/><path d="M4 5l12 5v23" fill="none" stroke="#aaa"/></svg></button>
                    <button aria-label="Explorador"><svg width="34" height="34" viewBox="0 0 34 34"><path d="M1 2h32v30H1z" fill="#999"/><path d="M11 10h23v22H2z" fill="#f4f4f4"/></svg></button>
                    <button aria-label="Paleta de vistas"><svg width="34" height="34" viewBox="0 0 34 34"><path d="M1 1h32v32H1z" fill="#f4f4f4"/><path d="M3 5h14v8H3zM8 16v6H3v8h14" fill="#f4c52c" stroke="#8a5c08" stroke-width="1.500"/></svg></button>
                    <button aria-label="Apariencias"><svg width="34" height="34"><use href="#i-ball"/></svg></button>
                    <button aria-label="Propiedades personalizadas"><svg width="34" height="34"><use href="#i-props"/></svg></button>
                </div>
            </section>
        </div>

        <div class="doc-controls">
            <button aria-label="Panel izquierdo"><svg width="24" height="26" viewBox="0 0 24 26"><path d="M.5.500h23v25H.5z" fill="none" stroke="#999"/><path d="M0 0h24v4H0z" fill="#999"/><path d="M6 9v10l-5-5z" fill="#888"/></svg></button>
            <button aria-label="Panel derecho"><svg width="24" height="26" viewBox="0 0 24 26"><path d="M.5.500h23v25H.5z" fill="none" stroke="#999"/><path d="M0 0h24v4H0z" fill="#999"/><path d="M18 9v10l5-5z" fill="#888"/></svg></button>
            <button aria-label="Minimizar documento"><svg width="22" height="26" viewBox="0 0 22 26"><path d="M0 22h22v4H0z" fill="#999"/></svg></button>
            <button aria-label="Restaurar documento"><svg width="29" height="27"><use href="#i-restore"/></svg></button>
            <button aria-label="Cerrar documento"><svg width="24" height="24"><use href="#i-cross"/></svg></button>
        </div>
    </main>

    <nav class="model-tabs">
        <div class="tab-nav"><button aria-label="Primero">|</button><button aria-label="Anterior">◂</button><button aria-label="Siguiente">▸</button><button aria-label="Último">▸|</button></div>
        <a href="#" class="current">Modelo</a>
        <a href="#">Vistas 3D</a>
        <a href="#" class="study">Estudio de movimiento 1</a>
    </nav>

    <footer class="snapbar">
        <button disabled aria-label="Punto"><svg viewBox="0 0 38 38"><circle cx="19" cy="19" r="1"/></svg></button>
        <button disabled aria-label="Centro"><svg viewBox="0 0 38 38"><circle cx="19" cy="19" r="16"/><circle cx="19" cy="19" r="1"/></svg></button>
        <button disabled aria-label="Medio"><svg viewBox="0 0 38 38"><path d="M2 36L36 2"/><circle cx="19" cy="19" r="3"/></svg></button>
        <button disabled aria-label="Cuadrante"><svg viewBox="0 0 38 38"><circle cx="19" cy="19" r="14"/><circle cx="19" cy="5" r="3"/><circle cx="19" cy="33" r="3"/><circle cx="5" cy="19" r="3"/><circle cx="33" cy="19" r="3"/></svg></button>
        <button disabled aria-label="Intersección"><svg viewBox="0 0 38 38"><path d="M2 4q12 0 11 12-1 10-11 18M27 2q-10 0-14 8M7 7l28 29"/><circle cx="13" cy="14" r="3"/></svg></button>
        <button disabled class="end" aria-label="Más próximo"><svg viewBox="0 0 38 38"><path d="M2 36L36 2M15 20l20 10"/><circle cx="16" cy="22" r="3"/></svg></button>
        <button disabled aria-label="Tangente"><svg viewBox="0 0 38 38"><circle cx="12" cy="26" r="10"/><path d="M9 2l27 34"/></svg></button>
        <button disabled aria-label="Perpendicular"><svg viewBox="0 0 38 38"><path d="M2 6l28 30M36 2L17 21M12 17l7-6 7 7"/></svg></button>
        <button disabled aria-label="Paralelo"><svg viewBox="0 0 38 38"><path d="M2 8l25 28M9 2l28 32M6 5l26 29"/></svg></button>
        <button disabled aria-label="Horizontal"><svg viewBox="0 0 38 38"><path d="M3 37V3h34M8 37V8h29"/></svg></button>
        <button disabled class="end" aria-label="Puntos"><svg viewBox="0 0 38 38"><path d="M5 34V5h29" stroke-dasharray="2 2"/><circle cx="5" cy="34" r="2"/><circle cx="34" cy="5" r="2"/></svg></button>
        <button disabled aria-label="Longitud"><svg viewBox="0 0 38 38"><path d="M3 8v20M35 8v20M4 17h30M9 13l-5 4 5 4M29 13l5 4-5 4M2 33h34"/></svg></button>
        <button disabled aria-label="Rejilla"><svg viewBox="0 0 38 38"><path d="M2 3v33M9 3v33M16 3v33M23 3v33M30 3v33M36 3v33M2 3h34M2 10h34M2 17h34M2 24h34M2 31h34" stroke-width="1"/><circle cx="10" cy="16" r="4"/></svg></button>
        <button disabled class="end final" aria-label="Ángulo"><svg viewBox="0 0 38 38"><path d="M36 34H4L26 6M14 22q10 2 11 12"/></svg></button>
    </footer>
</body>
</html>
```
FILE: styles.css
```css
* {
    box-sizing: border-box;
}

body {
    margin: 0;
    height: 100vh;
    display: flex;
    flex-direction: column;
    overflow: hidden;
    background: #474747;
    color: #eee;
    font-family: "Open Sans", "Noto Sans", sans-serif;
    font-size: 11px;
    line-height: 13px;
}

button {
    margin: 0;
    padding: 0;
    border: none;
    background: none;
    color: inherit;
    font: inherit;
}

a {
    color: inherit;
    text-decoration: none;
}

svg {
    display: block;
    flex: none;
}

.defs {
    position: absolute;
}

.caret {
    display: block;
    border: 5px solid transparent;
    border-top: 5px solid #fff;
    border-bottom: none;
}

.caret.small {
    border-width: 3px 3px 0;
    border-top-color: #777;
}

button:disabled .caret,
.off .caret {
    border-top-color: #949494;
}

/* title bar */
.titlebar {
    flex: none;
    display: flex;
    align-items: center;
    height: 50px;
    padding-bottom: 3px;
    border-bottom: 1px solid #9a9a9a;
}

.brand {
    display: flex;
    align-items: center;
    gap: 6px;
    width: 136px;
    margin-left: -4px;
    font-size: 13px;
    font-style: italic;
}

.brand-mark {
    width: 18px;
    height: 22px;
}

.menu {
    display: flex;
    align-items: center;
    gap: 15px;
    height: 100%;
    padding-right: 6px;
    border-right: 1px solid #9a9a9a;
}

.quick {
    display: flex;
    height: 100%;
    margin-left: 14px;
}

.pin {
    margin-left: -1px;
}

.quick button {
    display: flex;
    align-items: center;
    justify-content: center;
    width: 50px;
}

.quick .drop {
    width: 20px;
}

.quick .picked {
    background: #565656;
    border: 1px solid #3a3a3a;
}

.quick .picked-drop {
    border: 1px solid #2c2c2c;
}

.doc-title {
    margin-left: auto;
    margin-right: 20px;
    color: #ddd;
}

.search {
    display: flex;
    align-items: center;
    width: 252px;
    height: 23px;
    padding: 0 4px 0 6px;
    background: #fff;
}

.search input {
    flex: 1;
    min-width: 0;
    padding: 0 6px;
    border: none;
    background: none;
    font: inherit;
}

.search input::placeholder {
    color: #444;
    opacity: 1;
}

.search button {
    padding-left: 7px;
}

.window-controls {
    display: flex;
    align-items: center;
    margin-left: 3px;
    margin-right: -27px;
}

.window-controls button {
    display: flex;
    justify-content: center;
    width: 56px;
}

/* ribbon */
.ribbon {
    flex: none;
    display: flex;
    height: 142px;
    border-bottom: 1px solid #8c8c8c;
}

.group {
    flex: none;
    display: flex;
    gap: 1px;
    margin: 1px 0 2px;
    padding-left: 1px;
    border-right: 1px solid #8c8c8c;
}

.group.first {
    margin-left: -6px;
    padding-right: 1px;
}

.group.last {
    border-right: none;
}

.tool {
    display: flex;
    flex-direction: column;
    align-items: center;
    padding: 5px 5px 10px;
    color: #fff;
}

.tool span {
    margin-top: 2px;
}

.tool .caret {
    margin-top: auto;
}

.tool:disabled,
.tool-list button:disabled {
    color: #8f8f8f;
}

.tool.active {
    background: #555;
    border: 1px solid #3a3a3a;
    padding: 4px 4px 9px;
}

.glow {
    filter: drop-shadow(0 0 1px #c8dfe8) drop-shadow(0 0 2px rgba(170, 195, 205, 0.7));
}

.dim {
    filter: drop-shadow(0 0 1px #6e6e6e) drop-shadow(0 0 1px #5c5c5c);
}

.pt {
    fill: #fff;
    stroke: #333;
    stroke-width: 0.5;
}

.sketch-grid {
    display: grid;
    grid-template-columns: 66px 66px 66px 42px;
    grid-template-rows: repeat(3, 46px);
    gap: 0;
    padding-left: 6px;
}

.cell {
    display: flex;
    align-items: center;
    gap: 9px;
}

.cell svg {
    width: 38px;
    height: 38px;
}

.tool-list {
    display: grid;
    grid-template-rows: repeat(3, 46px);
    width: 232px;
    padding-right: 9px;
    margin-left: 5px;
}

.tool-list button {
    display: flex;
    align-items: center;
    gap: 4px;
    text-align: left;
}

.tool-list span {
    flex: 1;
}

/* workspace */
.workspace {
    position: relative;
    flex: 1;
    min-height: 0;
    display: flex;
    flex-direction: column;
    background:
        radial-gradient(ellipse 30% 40% at 100% 100%, rgba(238, 239, 245, 0.9), transparent),
        linear-gradient(to bottom, transparent 52%, rgba(255, 255, 255, 0.6) 61%, #fefefe 70%),
        radial-gradient(ellipse 52% 80% at 82% 47%, #dadde8, #e1e4ed 30%, rgba(232, 235, 242, 0.6) 62%, transparent),
        linear-gradient(to bottom, #fefefe 25%, #e2e5ee 57%);
}

.command-tabs {
    flex: none;
    display: flex;
    align-self: flex-start;
    height: 22px;
    margin-left: -9px;
    background: #2f2f2f;
    color: #fff;
}

.command-tabs a {
    padding: 4px 9px;
    border-right: 1px solid #8c8c8c;
}

.command-tabs .tight {
    padding: 4px 7px;
}

.command-tabs .wide {
    padding: 4px 10px;
}

.command-tabs .mbd {
    padding: 4px 15px;
    border-right: none;
}

.command-tabs .current {
    background: #474747;
    font-weight: bold;
}

.workspace-body {
    flex: 1;
    min-height: 0;
    display: flex;
}

.sidebar {
    flex: none;
    display: flex;
    flex-direction: column;
    width: 157px;
    padding: 3px 0 5px;
    border-right: 2px solid #333;
    background: #474747;
}

.splitter {
    height: 17px;
    border: 1px solid #8c8c8c;
    border-width: 1px 0;
}

.splitter i,
.collapse i {
    display: block;
    width: 6px;
    height: 6px;
    border-radius: 50%;
    background: #ccc;
}

.splitter i {
    margin: 5px 0 0 68px;
}

.panel-tabs {
    position: relative;
    display: flex;
    height: 50px;
    padding-top: 5px;
    border-bottom: 1px solid #8c8c8c;
}

.panel-tabs > button {
    display: flex;
    align-items: center;
    justify-content: center;
    width: 60px;
    border: 1px solid #8c8c8c;
    border-width: 1px 1px 0 0;
    background: #2f2f2f;
}

.panel-tabs > button.on {
    width: 51px;
    padding-right: 8px;
    background: #474747;
}

.panel-tabs > button:nth-child(3) {
    width: 44px;
    justify-content: flex-end;
}

.tab-scroll {
    position: absolute;
    right: 1px;
    bottom: 0;
    display: flex;
    background: #f0f0f0;
    color: #000;
}

.tab-scroll button {
    width: 18px;
    height: 19px;
    border: 1px solid #bbb;
}

.filter {
    height: 26px;
    padding-top: 4px;
    background: #555;
}

.tree-wrap {
    flex: 1;
    min-height: 0;
    display: flex;
}

.tree {
    flex: 1;
    min-width: 0;
    overflow: hidden;
    margin: 0;
    padding: 0;
    list-style: none;
    white-space: nowrap;
}

.tree li {
    position: relative;
    display: flex;
    align-items: center;
    gap: 5px;
    height: 22px;
    padding-left: 16px;
    color: #e6e6e6;
}

.tree .root {
    padding-left: 0;
    margin-left: -7px;
}

.tree svg {
    width: 18px;
    height: 18px;
}

.tree .open::before {
    content: "";
    position: absolute;
    left: 0;
    border: 4px solid transparent;
    border-left: 4px solid #fff;
    border-right: none;
}

.vbar {
    width: 17px;
    padding: 17px 7px 0 8px;
    background: #f0f0f0;
}

.vbar i {
    display: block;
    height: 88%;
    background: #888;
}

.hbar {
    height: 17px;
    padding: 8px 0 0 7px;
    background: #f0f0f0;
}

.hbar i {
    display: block;
    width: 33px;
    height: 2px;
    background: #888;
}

.viewport {
    position: relative;
    flex: 1;
    min-width: 0;
    overflow: hidden;
}

.collapse {
    position: absolute;
    left: 0;
    top: 46%;
    width: 8px;
    height: 38px;
    padding-left: 1px;
    background: #474747;
}

.view-tools {
    display: flex;
    justify-content: center;
    padding: 6px 0 0 25px;
}

.view-tools button {
    display: flex;
    align-items: center;
    justify-content: center;
    width: 46px;
    height: 38px;
}

.view-tools .drop {
    width: 20px;
}

.view-tools .caret {
    border-top-color: #888;
}

.model {
    position: absolute;
    left: 663px;
    top: 176px;
    width: 440px;
    height: 410px;
    fill: none;
    stroke: #1a1a1a;
    stroke-width: 3;
}

.watermark {
    position: absolute;
    left: 404px;
    top: 260px;
    display: flex;
    align-items: center;
    height: 90px;
    color: #e9ebf1;
    font-family: "Noto Sans CJK SC", sans-serif;
    font-size: 78px;
    font-weight: 300;
    line-height: 90px;
    text-shadow: 1px 1px 1px #666, -1px -1px 0 #fff;
}

.watermark span {
    padding-top: 24px;
    font-family: "Liberation Mono", monospace;
    font-size: 67px;
}

.triad {
    position: absolute;
    left: 16px;
    bottom: 30px;
    font-size: 8px;
    font-weight: bold;
}

.task-pane {
    position: absolute;
    right: 0;
    top: 49px;
    width: 15px;
    overflow: hidden;
    border-left: 1px solid #777;
}

.task-pane button {
    display: flex;
    align-items: center;
    width: 40px;
    height: 40px;
    padding-left: 4px;
    border-bottom: 1px solid #777;
    background: #2f2f2f;
}

.task-pane .on {
    background: #a9a9a9;
}

.doc-controls {
    position: absolute;
    top: 12px;
    right: 0;
    width: 206px;
    display: flex;
    overflow: hidden;
    color: #999;
}

.doc-controls button {
    flex: none;
    display: flex;
    align-items: center;
    justify-content: center;
    width: 46px;
}

/* bottom */
.model-tabs {
    flex: none;
    display: flex;
    height: 16px;
    line-height: 14px;
    color: #fff;
}

.model-tabs a {
    padding: 0 10px;
    border-right: 1px solid #8c8c8c;
    background: #2f2f2f;
}

.model-tabs a.current {
    padding: 0 9px 0 12px;
    background: #474747;
    font-weight: bold;
}

.model-tabs .study {
    padding-right: 24px;
}

.tab-nav {
    display: flex;
    width: 56px;
    background: #a5a5a5;
    color: #777;
}

.tab-nav button {
    flex: 1;
    border-right: 1px solid #ccc;
    line-height: 14px;
}

.snapbar {
    flex: none;
    display: flex;
    align-items: center;
    height: 45px;
    padding: 5px 0 0 2px;
}

.snapbar button {
    display: flex;
    justify-content: center;
    width: 47px;
}

.snapbar .end {
    width: 52px;
    height: 40px;
    align-items: center;
    margin-right: 3px;
    padding-right: 5px;
    border-right: 1px solid #8c8c8c;
}

.snapbar .final {
    width: 56px;
    padding-right: 9px;
}

.snapbar svg {
    width: 38px;
    height: 38px;
    fill: none;
    stroke: #363636;
    stroke-width: 2;
    filter: drop-shadow(0 0 1px #727272) drop-shadow(0 0 1px #606060);
}
```
